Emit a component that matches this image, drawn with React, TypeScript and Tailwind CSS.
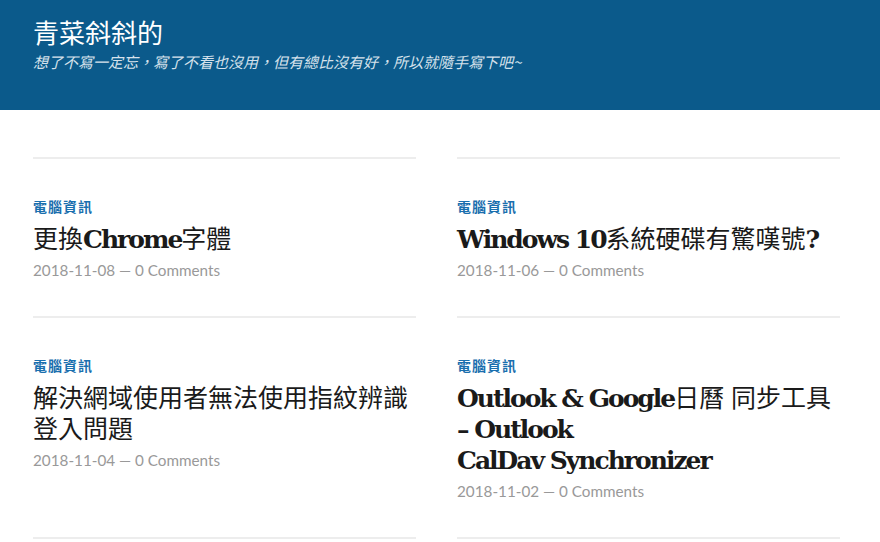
import React from "react";

type Post = {
  category: string;
  title: string[];
  date: string;
  comments: string;
};

const posts: Post[] = [
  {
    category: "電腦資訊",
    title: ["更換Chrome字體"],
    date: "2018-11-08",
    comments: "0 Comments",
  },
  {
    category: "電腦資訊",
    title: ["Windows 10系統硬碟有驚嘆號?"],
    date: "2018-11-06",
    comments: "0 Comments",
  },
  {
    category: "電腦資訊",
    title: ["解決網域使用者無法使用指紋辨識登入問題"],
    date: "2018-11-04",
    comments: "0 Comments",
  },
  {
    category: "電腦資訊",
    title: ["Outlook & Google日曆 同步工具", "– Outlook", "CalDav Synchronizer"],
    date: "2018-11-02",
    comments: "0 Comments",
  },
];

// latin runs are bold serif, CJK runs stay regular like the original Ming fallback.
// spans get a small line-height so the mixed fonts don't stretch the 31px line box
const TitleText = ({ text }: { text: string }) => {
  const parts = text.split(/([\u3000-\u9fff\uff00-\uffef]+)/).filter(Boolean);
  return (
    <>
      {parts.map((p, i) =>
        /[\u3000-\u9fff\uff00-\uffef]/.test(p) ? (
          <span key={i} className="leading-[20px] font-normal font-['Noto_Sans_CJK_TC',sans-serif]">
            {p}
          </span>
        ) : (
          <span key={i} className="leading-[20px] font-bold tracking-[-2px]">
            {p}
          </span>
        )
      )}
    </>
  );
};

const PostItem = ({ post }: { post: Post }) => (
  <article className="border-t-2 border-[#ededed] pt-[37px] pb-[35px]">
    <a className="block text-[14px] leading-[20px] font-bold tracking-[1px] text-[#1a6fae] font-['Noto_Sans_CJK_TC',sans-serif]">
      {post.category}
    </a>
    <h2 className="mt-[8px] text-[25px] leading-[31px] text-[#1a1a1a] font-['DejaVu_Serif','Noto_Sans_CJK_TC',serif]">
      {post.title.map((line, i) => (
        <React.Fragment key={i}>
          {i > 0 && <br />}
          <TitleText text={line} />
        </React.Fragment>
      ))}
    </h2>
    <p className="mt-[4px] text-[15.25px] leading-[22px] text-[#999999] font-['Lato','Noto_Sans_CJK_TC',sans-serif]">
      {post.date} — {post.comments}
    </p>
  </article>
);

export default function App() {
  return (
    <div className="min-h-screen bg-white">
      <header className="h-[110px] bg-[#0b5a8b] px-[33px] pt-[16px]">
        <h1 className="text-[26px] leading-[31px] text-white font-normal font-['Noto_Sans_CJK_TC',sans-serif]">
          青菜斜斜的
        </h1>
        <p className="mt-[5px] text-[15px] leading-[20px] italic text-[#d6e2ec] font-['Noto_Sans_CJK_TC',sans-serif]">
          想了不寫一定忘，寫了不看也沒用，但有總比沒有好，所以就隨手寫下吧~
        </p>
      </header>

      <main className="pl-[33px] pr-[40px] pt-[47px]">
        <div className="grid grid-cols-[383px_383px] gap-x-[41px]">
          {posts.map((post, i) => (
            <PostItem key={i} post={post} />
          ))}
          <div className="border-t-2 border-[#ededed] h-[20px]" />
          <div className="border-t-2 border-[#ededed] h-[20px]" />
        </div>
      </main>
    </div>
  );
}
